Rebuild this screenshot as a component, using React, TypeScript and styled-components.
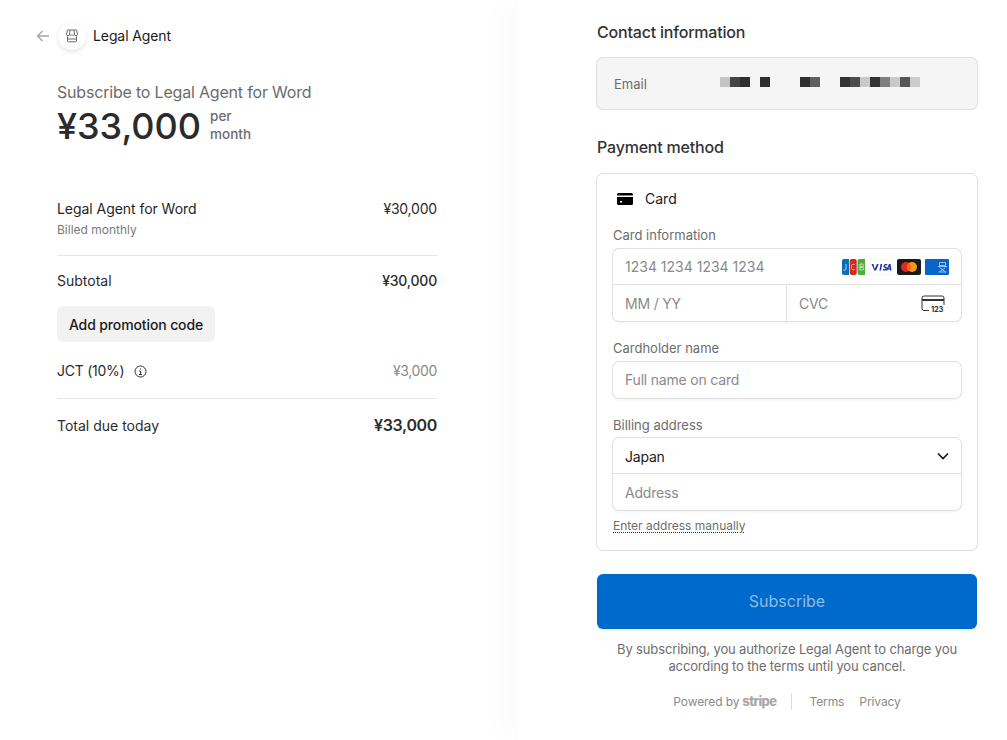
import React from "react";
import styled, { createGlobalStyle } from "styled-components";

const Global = createGlobalStyle`
  html, body { margin: 0; padding: 0; background: #fff; }
  body { font-family: Inter, "Liberation Sans", sans-serif; color: #1a1a1a; -webkit-font-smoothing: antialiased; }
`;

const Page = styled.div`
  display: flex;
  width: 1007px;
  height: 740px;
  overflow: hidden;
`;

const LeftPane = styled.section`
  width: 517px;
  flex: none;
  padding: 20px 80px 0 57px;
  box-sizing: border-box;
`;

const RightPane = styled.section`
  flex: 1;
  padding: 20px 30px 0 80px;
  box-sizing: border-box;
  box-shadow: -15px 0 30px rgba(0, 0, 0, 0.018);
  background: #fff;
`;

const Header = styled.header`
  display: flex;
  align-items: center;
  height: 32px;
  margin-left: -21px;
`;

const BackArrow = styled.svg`
  width: 14px;
  height: 14px;
  margin-right: 8px;
  flex: none;
`;

const LogoCircle = styled.span`
  width: 28px;
  height: 28px;
  border-radius: 50%;
  background: #fff;
  box-shadow: 0 2px 5px rgba(0, 0, 0, 0.1);
  display: flex;
  align-items: center;
  justify-content: center;
  margin-right: 8px;
`;

const Merchant = styled.span`
  font-size: 14px;
  font-weight: 400;
  letter-spacing: -0.1px;
  margin-left: -1px;
  color: #1a1a1a;
  line-height: 20px;
`;

const ProductTitle = styled.div`
  margin-top: 30px;
  font-size: 16px;
  font-weight: 400;
  letter-spacing: -0.19px;
  line-height: 20px;
  color: #6b6b6b;
`;

const PriceRow = styled.div`
  display: flex;
  align-items: center;
  height: 46px;
  margin-top: 1px;
`;

const Price = styled.div`
  font-size: 36px;
  font-weight: 500;
  line-height: 46px;
  color: #2b2b2b;
`;

const Per = styled.div`
  margin: -2px 0 0 9px;
  font-size: 13.5px;
  font-weight: 500;
  line-height: 18px;
  color: #6b6b6b;
`;

const LineItem = styled.div`
  margin-top: 50px;
  display: flex;
  justify-content: space-between;
  padding-bottom: 17px;
  border-bottom: 1px solid #e6e6e6;
`;

const ItemName = styled.div`
  font-size: 14px;
  font-weight: 400;
  letter-spacing: -0.05px;
  line-height: 20px;
  color: #1f1f1f;
`;

const ItemNote = styled.div`
  font-size: 12px;
  line-height: 16px;
  margin-top: 3px;
  color: #7a7a7a;
`;

const ItemPrice = styled.span`
  font-size: 14px;
  letter-spacing: -0.2px;
  line-height: 20px;
  color: #2b2b2b;
`;

const Row = styled.div<{ $top?: number }>`
  display: flex;
  justify-content: space-between;
  align-items: center;
  line-height: 20px;
  font-size: 14px;
  margin-top: ${(p) => p.$top ?? 0}px;
`;

const RowLabel = styled.span<{ $tight?: boolean }>`
  font-weight: 400;
  letter-spacing: ${(p) => (p.$tight ? -0.25 : 0)}px;
  color: #2b2b2b;
  display: inline-flex;
  align-items: center;
`;

const Amount = styled.span<{ $muted?: boolean; $bold?: boolean }>`
  font-size: 14px;
  letter-spacing: ${(p) => (p.$muted ? -0.35 : -0.2)}px;
  font-weight: ${(p) => (p.$bold ? 500 : 400)};
  color: ${(p) => (p.$muted ? "#8a8a8a" : "#2b2b2b")};
`;

const PromoButton = styled.button`
  display: block;
  margin-top: 15px;
  height: 36px;
  width: 158px;
  padding: 0;
  border: 0;
  border-radius: 6px;
  background: #f2f2f2;
  font: 500 14px Inter, sans-serif;
  letter-spacing: -0.12px;
  color: #1a1a1a;
`;

const Divider = styled.div<{ $top: number }>`
  height: 1px;
  background: #e6e6e6;
  margin-top: ${(p) => p.$top}px;
`;

const InfoIcon = styled.svg`
  width: 13px;
  height: 13px;
  margin-left: 10px;
`;

const TotalAmount = styled.span`
  font-size: 16px;
  font-weight: 600;
  letter-spacing: -0.35px;
  margin-top: -2px;
  color: #2b2b2b;
`;

const SectionTitle = styled.h2<{ $top?: number }>`
  margin: ${(p) => p.$top ?? 0}px 0 0;
  font-size: 16px;
  font-weight: 500;
  letter-spacing: -0.2px;
  line-height: 24px;
  color: #333;
`;

const EmailCard = styled.div`
  margin-top: 14px;
  height: 51px;
  box-sizing: border-box;
  border-radius: 6px;
  background: #f5f5f5;
  box-shadow: 0 0 0 1px #e0e0e0, 0 1px 1px rgba(0, 0, 0, 0.05);
  display: flex;
  align-items: center;
  padding-left: 17px;
`;

const EmailLabel = styled.span`
  font-size: 13px;
  font-weight: 400;
  margin-top: 1px;
  color: #6d6d6d;
  width: 106px;
  flex: none;
`;

const Pixels = styled.div`
  display: flex;
  height: 10px;
  margin-top: -3px;
`;

const Pixel = styled.span<{ $c: string }>`
  width: 10px;
  height: 10px;
  background: ${(p) => p.$c};
`;

const PayCard = styled.div`
  margin-top: 15px;
  height: 376px;
  box-sizing: border-box;
  padding: 0 16px;
  border-radius: 6px;
  background: #fff;
  box-shadow: 0 0 0 1px #e0e0e0, 0 1px 1px rgba(0, 0, 0, 0.05);
`;

const CardTab = styled.div`
  display: flex;
  align-items: center;
  height: 49px;
  font-size: 14px;
  font-weight: 400;
  color: #1a1a1a;
`;

const CardGlyph = styled.svg`
  width: 16px;
  height: 12px;
  margin-right: 12px;
  margin-left: 4px;
`;

const Label = styled.div<{ $top?: number; $gap?: number }>`
  margin-top: ${(p) => p.$top ?? 0}px;
  font-size: 13px;
  font-weight: 400;
  line-height: 18px;
  color: #6d6d6d;
  margin-bottom: ${(p) => p.$gap ?? 5}px;
`;

const FieldGroup = styled.div`
  border-radius: 6px;
  box-shadow: 0 0 0 1px #e0e0e0, 0 2px 3px rgba(0, 0, 0, 0.05);
  background: #fff;
  overflow: hidden;
`;

const FieldRow = styled.div<{ $h: number; $line?: boolean }>`
  display: flex;
  height: ${(p) => p.$h}px;
  box-sizing: border-box;
  border-top: ${(p) => (p.$line ? "1px solid #e0e0e0" : "0")};
`;

const Field = styled.div<{ $digits?: boolean; $icon?: boolean; $lift?: boolean }>`
  flex: 1 1 0;
  box-sizing: border-box;
  display: flex;
  align-items: center;
  justify-content: space-between;
  padding: 0 ${(p) => (p.$icon ? 16 : 12)}px ${(p) => (p.$lift ? 1 : 0)}px 12px;
  font-size: 14px;
  letter-spacing: ${(p) => (p.$digits ? 0 : -0.2)}px;
  color: #8a8a8a;
  min-width: 0;
`;

const ExpiryField = styled(Field)`
  flex: 0 0 174px;
  border-right: 1px solid #e0e0e0;
`;

const CountryField = styled(Field)`
  padding-top: 1px;
  color: #1a1a1a;
`;

const Brands = styled.div`
  display: flex;
  gap: 4px;
`;

const Cvc = styled.svg`
  width: 24px;
  height: 17px;
`;

const ManualLink = styled.div`
  margin-top: 8px;
  font-size: 12px;
  line-height: 16px;
  color: #6d6d6d;
  display: inline-block;
  text-decoration: underline dotted #333;
  text-underline-offset: 2px;
`;

const SubscribeButton = styled.button`
  display: block;
  width: 380px;
  height: 55px;
  margin-top: 24px;
  padding: 0 0 2px;
  border: 0;
  border-radius: 6px;
  background: #0069cc;
  color: #8bbce8;
  font: 400 16px Inter, sans-serif;
  box-shadow: 0 1px 2px rgba(0, 0, 0, 0.1);
`;

const Terms = styled.p`
  margin: 12px 0 0;
  text-align: center;
  font-size: 13px;
  letter-spacing: -0.14px;
  line-height: 17px;
  color: #6d6d6d;
`;

const Footer = styled.footer`
  margin-top: 17px;
  display: flex;
  justify-content: center;
  align-items: center;
  font-size: 12px;
  letter-spacing: -0.1px;
  color: #8a8a8a;
  height: 18px;
`;

const StripeWord = styled.span`
  font-weight: 800;
  font-size: 13px;
  letter-spacing: -0.6px;
  color: #a8a8a8;
  margin-left: 3px;
`;

const FooterRule = styled.span`
  width: 1px;
  height: 17px;
  background: #dcdcdc;
  margin: 0 17px 0 15px;
`;

const FooterLink = styled.span`
  & + & {
    margin-left: 15px;
  }
`;

const BrandSvg = styled.svg`
  width: 24px;
  height: 16px;
  display: block;
`;

const jcb = (
  <BrandSvg viewBox="0 0 24 16">
    <path d="M3 0h5v16H3a2 2 0 0 1-2-2V2a2 2 0 0 1 2-2z" fill="#0a6fb0" />
    <rect x="8.700" y="0" width="7" height="16" rx="2" fill="#d0291f" />
    <path d="M16.500 2a2 2 0 0 1 2-2h5.500v16h-5.500a2 2 0 0 1-2-2z" fill="#4ead37" />
    <path d="M5 5v5c0 1.500-2.500 1.500-3 .5M13.500 5.500c-2-.8-3.200.3-3.200 2.500s1.200 3.300 3.200 2.500M19 5h2.500c1.200 0 1.200 2.800 0 3H19zM19 8h2.800c1.200 0 1.200 3-.1 3H19z" stroke="#fff" strokeWidth=".9" fill="none" opacity=".75" />
  </BrandSvg>
);
const visa = (
  <BrandSvg viewBox="0 0 24 16">
    <rect x=".25" y=".25" width="23.500" height="15.500" rx="1.500" fill="#fff" stroke="#e6e6e6" strokeWidth=".5" />
    <path d="M2.500 5h2l1 5 2.600-5h1.600L7 11.500H5.400zM10.400 11.500 11.600 5h1.600L12 11.500zM18.400 5.200l-.3 1.300c-1-.5-2.300-.4-2.300.3 0 .8 2.600 1 2.200 3-.4 2-3 2-4.200 1.400l.3-1.400c1 .6 2.400.6 2.500-.1.100-.8-2.500-1-2.100-3 .4-1.900 2.900-2 3.900-1.500zM20 5h1.500l1 6.500h-1.500l-.1-1h-2l-.5 1h-1.600zm.2 2.200-.9 2.100h1.200z" fill="#1a2fa8" fillRule="evenodd" />
  </BrandSvg>
);
const mc = (
  <BrandSvg viewBox="0 0 24 16">
    <rect width="24" height="16" rx="2" fill="#1a1a1a" />
    <circle cx="9" cy="8" r="5" fill="#e02a1d" />
    <circle cx="15" cy="8" r="5" fill="#f39a1c" />
    <path d="M12 4a5 5 0 0 1 0 8 5 5 0 0 1 0-8z" fill="#f3651c" />
  </BrandSvg>
);
const amex = (
  <BrandSvg viewBox="0 0 24 16">
    <rect width="24" height="16" rx="1" fill="#0a63c9" />
    <path d="M14.500 3.500h6v3h-6zM13 7.500h9M14.500 8.500l6 4.500M20.500 8.500l-6 4.500M13.500 13h8" stroke="#b9d7f5" strokeWidth=".8" fill="none" />
  </BrandSvg>
);

const shades = [
  "#c4c4c4", "#444", "#2e2e2e", "", "#2e2e2e", "", "", "", "#2f2f2f", "#606060", "", "",
  "#333", "#4c4c4c", "#c9c9c9", "#333", "#7f7f7f", "#c9c9c9", "#555", "#ccc",
];

export default function App() {
  return (
    <>
      <Global />
      <Page>
        <LeftPane>
          <Header>
            <BackArrow viewBox="0 0 14 14" fill="none" stroke="#a8a8a8" strokeWidth="1.400">
              <path d="M13 7H1.500M6.500 2 1.500 7l5 5" />
            </BackArrow>
            <LogoCircle>
              <svg width="14" height="14" viewBox="0 0 14 14" fill="none" stroke="#6b6b6b" strokeWidth="1">
                <path d="M2.500 1h9l1 4.200a1.500 1.500 0 0 1-3 .2 1.500 1.500 0 0 1-2.500.3 1.500 1.500 0 0 1-2.500-.3 1.500 1.500 0 0 1-3-.2zM2.500 7.500v4.500a.8.8 0 0 0 .8.8h7.400a.8.8 0 0 0 .8-.8V7.500M2.500 10h9M5 1 4.500 5.500M9 1l.5 4.500" />
              </svg>
            </LogoCircle>
            <Merchant>Legal Agent</Merchant>
          </Header>
          <ProductTitle>Subscribe to Legal Agent for Word</ProductTitle>
          <PriceRow>
            <Price>¥33,000</Price>
            <Per>
              per
              <br />
              month
            </Per>
          </PriceRow>
          <LineItem>
            <div>
              <ItemName>Legal Agent for Word</ItemName>
              <ItemNote>Billed monthly</ItemNote>
            </div>
            <ItemPrice>¥30,000</ItemPrice>
          </LineItem>
          <Row $top={15}>
            <RowLabel>Subtotal</RowLabel>
            <Amount $bold>¥30,000</Amount>
          </Row>
          <PromoButton>Add promotion code</PromoButton>
          <Row $top={19}>
            <RowLabel $tight>
              JCT (10%)
              <InfoIcon viewBox="0 0 13 13" fill="none" stroke="#333" strokeWidth="1">
                <circle cx="6.500" cy="6.500" r="5.500" />
                <path d="M5.200 6h1.400v3.200M5 9.500h3M6.500 3.500v1" />
              </InfoIcon>
            </RowLabel>
            <Amount $muted>¥3,000</Amount>
          </Row>
          <Divider $top={17} />
          <Row $top={17}>
            <RowLabel>Total due today</RowLabel>
            <TotalAmount>¥33,000</TotalAmount>
          </Row>
        </LeftPane>
        <RightPane>
          <SectionTitle>Contact information</SectionTitle>
          <EmailCard>
            <EmailLabel>Email</EmailLabel>
            <Pixels>
              {shades.map((c, i) => (
                <Pixel key={i} $c={c || "transparent"} />
              ))}
            </Pixels>
          </EmailCard>
          <SectionTitle $top={26}>Payment method</SectionTitle>
          <PayCard>
            <CardTab>
              <CardGlyph viewBox="0 0 16 12">
                <path d="M1.500 0h13A1.500 1.500 0 0 1 16 1.500V2.500H0V1.500A1.500 1.500 0 0 1 1.500 0zM0 4h16v6.500a1.500 1.500 0 0 1-1.500 1.500h-13A1.500 1.500 0 0 1 0 10.500zM3 8v1.500h2V8z" fill="#000" fillRule="evenodd" />
              </CardGlyph>
              Card
            </CardTab>
            <Label $top={3}>Card information</Label>
            <FieldGroup>
              <FieldRow $h={35}>
                <Field $digits>
                  1234 1234 1234 1234
                  <Brands>
                    {jcb}
                    {visa}
                    {mc}
                    {amex}
                  </Brands>
                </Field>
              </FieldRow>
              <FieldRow $h={37} $line>
                <ExpiryField>MM / YY</ExpiryField>
                <Field $icon>
                  CVC
                  <Cvc viewBox="0 0 24 17" fill="none" stroke="#333" strokeWidth="1">
                    <path d="M8 15.500H3A2 2 0 0 1 1 13.500V3A2 2 0 0 1 3 1h18a2 2 0 0 1 2 2v7" />
                    <path d="M1 5h22" strokeWidth="2" />
                    <text x="10" y="16.500" fontSize="7.500" fontWeight="700" fill="#333" stroke="none" fontFamily="Inter, sans-serif">123</text>
                  </Cvc>
                </Field>
              </FieldRow>
            </FieldGroup>
            <Label $top={18}>Cardholder name</Label>
            <FieldGroup>
              <FieldRow $h={36}>
                <Field $lift>Full name on card</Field>
              </FieldRow>
            </FieldGroup>
            <Label $top={18} $gap={4}>Billing address</Label>
            <FieldGroup>
              <FieldRow $h={35}>
                <CountryField>
                  Japan
                  <svg width="12" height="8" viewBox="0 0 12 8" fill="none" stroke="#1a1a1a" strokeWidth="1.700">
                    <path d="M1 1.500 6 6.500l5-5" />
                  </svg>
                </CountryField>
              </FieldRow>
              <FieldRow $h={37} $line>
                <Field>Address</Field>
              </FieldRow>
            </FieldGroup>
            <ManualLink>Enter address manually</ManualLink>
          </PayCard>
          <SubscribeButton>Subscribe</SubscribeButton>
          <Terms>
            By subscribing, you authorize Legal Agent to charge you
            <br />
            according to the terms until you cancel.
          </Terms>
          <Footer>
            Powered by<StripeWord>stripe</StripeWord>
            <FooterRule />
            <FooterLink>Terms</FooterLink>
            <FooterLink>Privacy</FooterLink>
          </Footer>
        </RightPane>
      </Page>
    </>
  );
}
